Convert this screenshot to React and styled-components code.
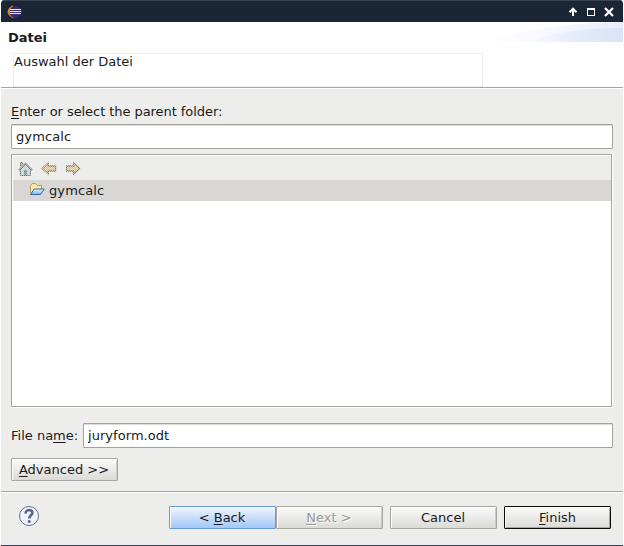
import React from 'react';
import styled, { createGlobalStyle, css } from 'styled-components';

const GlobalStyle = createGlobalStyle`
  * { box-sizing: border-box; }
  body { margin: 0; background: #fff; }
`;

const Window = styled.div`
  width: 622px;
  height: 546px;
  margin-left: 1px;
  display: flex;
  flex-direction: column;
  background: #ededeb;
  border-bottom: 1px solid #36404f;
  border-radius: 4px 4px 0 0;
  overflow: hidden;
  color: #1a1a1a;
  font-family: 'DejaVu Sans', sans-serif;
  font-size: 13px;
  line-height: 16px;
  white-space: nowrap;
`;

const TitleBar = styled.header`
  height: 22px;
  flex: none;
  display: flex;
  align-items: center;
  justify-content: space-between;
  padding: 1px 8px 0 6px;
  background: #1a2636;
  border-top: 1px solid #3b4655;
`;

const WindowControls = styled.div`
  display: flex;
  gap: 6px;
`;

const Banner = styled.section`
  height: 67px;
  flex: none;
  display: flex;
  justify-content: space-between;
  background: #fff;
  border-bottom: 1px solid #fff;
  box-shadow: inset 0 -1px #a6a6a2;
`;

const BannerText = styled.div`
  padding: 8px 0 0 7px;
`;

const Title = styled.h1`
  margin: 0;
  font-size: 13px;
  line-height: 16px;
  font-weight: bold;
`;

const Message = styled.p`
  width: 470px;
  height: 34px;
  margin: 7px 0 0 5px;
  border: 1px solid #ececec;
`;

const Form = styled.main`
  height: 403px;
  flex: none;
  padding: 15px 10px 0;
  border-bottom: 1px solid #a5a59d;
  display: flex;
  flex-direction: column;
  align-items: flex-start;
`;

const Label = styled.label`
  letter-spacing: ${({ $spacing }) => $spacing || '0'};
`;

const Key = styled.span`
  text-decoration: underline;
  text-decoration-thickness: 1px;
  text-underline-offset: 2px;
  text-decoration-skip-ink: none;
`;

const Field = styled.input`
  height: 25px;
  width: ${({ $width }) => $width};
  padding: 0 4px 1px;
  border: 1px solid #a3a39b;
  border-radius: 1px;
  outline: none;
  background: #fff;
  box-shadow: inset 0 1px #dededb;
  color: inherit;
  font: inherit;
  letter-spacing: ${({ $spacing }) => $spacing || '0'};
`;

const FolderField = styled(Field)`
  margin-top: 4px;
`;

const Tree = styled.div`
  width: 601px;
  height: 253px;
  margin-top: 5px;
  flex: none;
  border: 1px solid #a5a5a1;
  box-shadow: 1px 1px #fff;
  background: #fff;
`;

const TreeTools = styled.div`
  height: 25px;
  display: flex;
  gap: 8px;
  padding: 5px 0 0 4px;
  margin-left: 1px;
  background: #ededeb;
  border-top: 1px solid #fff;
`;

const TreeRow = styled.div`
  height: 21px;
  display: flex;
  align-items: center;
  gap: 4px;
  margin-left: 1px;
  padding-left: 16px;
  background: #d8d7d5;
  letter-spacing: 0.1px;
`;

const NameRow = styled.div`
  display: flex;
  align-items: center;
  justify-content: space-between;
  width: 602px;
  margin-top: 16px;
`;

const buttonTones = {
  focus: css`
    border-color: #659bda;
    background: linear-gradient(#f0f6ff, #a3c7f7);
    box-shadow: inset 1px 1px #fff;
  `,
  disabled: css`
    color: #999995;
    text-shadow: 1px 1px #fff;
  `,
  primary: css`
    padding-right: 0;
    border-color: #0b0b0b;
    box-shadow: inset 1px 1px #fff, inset -1px -1px #a7a7a1;
  `,
};

const Button = styled.button`
  width: 107px;
  height: 23px;
  padding: 1px 1px 0 0;
  flex: none;
  border: 1px solid #a7a7a1;
  border-radius: 1px;
  background: linear-gradient(#fbfbfa, #dadad7);
  box-shadow: inset 1px 1px #fff, inset -1px 0 #cbcbc5;
  color: inherit;
  font: inherit;
  ${({ $tone }) => buttonTones[$tone]}
`;

const AdvancedButton = styled(Button)`
  margin-top: 10px;
`;

const Footer = styled.footer`
  flex: 1;
  display: flex;
  align-items: flex-start;
  justify-content: space-between;
  padding: 12px 12px 0 17px;
  border-top: 1px solid #fff;
`;

const Actions = styled.div`
  display: flex;
  gap: 7px;
  margin-top: 1px;
`;

const Pager = styled.div`
  display: flex;
`;

const EclipseIcon = () => (
  <svg width="16" height="16" viewBox="0 0 16 16">
    <path d="M6 1.8C-.8 4.7-.8 10.6 6 13.9C1.8 10.8 1.8 5.3 6 1.8Z" fill="#ef8616" stroke="#ef8616" strokeWidth=".7" />
    <circle cx="8.6" cy="8" r="5.9" fill="#37296b" />
    <path d="M3 5.5H14M2.6 7.5H14.3M3 9.5H14" stroke="#e9e8f7" />
  </svg>
);

const UpIcon = () => (
  <svg width="12" height="12" viewBox="0 0 12 12">
    <path d="M6 10V3M2.5 6.2L6 2.7L9.5 6.2" fill="none" stroke="#fff" strokeWidth="2" />
  </svg>
);

const MaximizeIcon = () => (
  <svg width="12" height="12" viewBox="0 0 12 12" shapeRendering="crispEdges">
    <path d="M2 2H10V10H2ZM3 4V9H9V4Z" fill="#fff" fillRule="evenodd" />
  </svg>
);

const CloseIcon = () => (
  <svg width="12" height="12" viewBox="0 0 12 12">
    <path d="M2 2L10 10M10 2L2 10" stroke="#fff" strokeWidth="2.2" />
  </svg>
);

const BannerSwoosh = () => (
  <svg width="140" height="20" viewBox="0 0 140 20">
    <defs>
      <linearGradient id="swoosh">
        <stop offset="0" stopColor="#fff" />
        <stop offset=".5" stopColor="#f6f8fe" />
        <stop offset="1" stopColor="#e6edfa" />
      </linearGradient>
      <linearGradient id="swooshFront">
        <stop offset="0" stopColor="#dbe4f7" stopOpacity="0" />
        <stop offset="1" stopColor="#dbe4f7" />
      </linearGradient>
    </defs>
    <path d="M0 20C38 8 82 1 140 0V20Z" fill="url(#swoosh)" />
    <path d="M45 20C65 12 95 6 140 6V20Z" fill="url(#swooshFront)" />
  </svg>
);

const Dither = () => (
  <defs>
    <pattern id="dither" width="2" height="2" patternUnits="userSpaceOnUse">
      <path d="M0 0H1V1H0ZM1 1H2V2H1Z" fill="#ededeb" shapeRendering="crispEdges" />
    </pattern>
  </defs>
);

const HomeIcon = () => (
  <svg width="16" height="16" viewBox="0 0 16 16">
    <Dither />
    <path d="M3.5 6V1.5H5.5V4" fill="#a5a398" stroke="#77776f" />
    <path d="M3.5 8V14.5H13.5V8L8.5 3Z" fill="#c3d3de" stroke="#66747a" />
    <path d="M1.8 9.2L8.5 2.5L15.2 9.2" fill="none" stroke="#626c70" strokeWidth="1.5" />
    <path d="M7 14V9H10V14Z" fill="#5e9080" />
    <path d="M0 0H16V16H0Z" fill="url(#dither)" opacity=".55" />
  </svg>
);

const ArrowIcon = ({ forward }) => (
  <svg width="16" height="16" viewBox="0 0 16 16">
    <g transform={forward ? 'translate(16 0) scale(-1 1)' : undefined}>
      <path d="M1.2 7.5L7.3 2V5H14.5V10H7.3V13Z" fill="#efc25a" stroke="#a16d18" strokeWidth="1.3" />
    </g>
    <path d="M0 0H16V16H0Z" fill="url(#dither)" opacity=".7" />
  </svg>
);

const FolderIcon = () => (
  <svg width="16" height="16" viewBox="0 0 16 16">
    <defs>
      <linearGradient id="folderFront" x2="0" y2="1">
        <stop stopColor="#e2f3fc" />
        <stop offset="1" stopColor="#79b3e8" />
      </linearGradient>
    </defs>
    <path d="M1.5 10.5V2.5L3 .5H6.5L8 2.5H12.5V6" fill="#fce9a6" stroke="#c6a052" />
    <path d="M1.5 11.5L5.2 6H15.3L11.5 11.5H2Z" fill="url(#folderFront)" stroke="#3269ab" />
  </svg>
);

const HelpIcon = () => (
  <svg width="22" height="22" viewBox="0 0 22 22">
    <circle cx="11" cy="11" r="9.5" fill="#f1f3f6" stroke="#63718f" />
    <path d="M7.7 8.6C7.3 3.8 14.6 3.9 14.4 7.8C14.2 10.3 11.3 10.2 11.3 13.4" fill="none" stroke="#53658d" strokeWidth="2.6" />
    <circle cx="11.2" cy="16.4" r="1.5" fill="#53658d" />
  </svg>
);

export default function App() {
  return (
    <>
      <GlobalStyle />
      <Window>
        <TitleBar>
          <EclipseIcon />
          <WindowControls>
            <UpIcon />
            <MaximizeIcon />
            <CloseIcon />
          </WindowControls>
        </TitleBar>
        <Banner>
          <BannerText>
            <Title>Datei</Title>
            <Message>Auswahl der Datei</Message>
          </BannerText>
          <BannerSwoosh />
        </Banner>
        <Form>
          <Label $spacing="-0.06px"><Key>E</Key>nter or select the parent folder:</Label>
          <FolderField $width="602px" $spacing="0.1px" defaultValue="gymcalc" />
          <Tree>
            <TreeTools>
              <HomeIcon />
              <ArrowIcon />
              <ArrowIcon forward />
            </TreeTools>
            <TreeRow>
              <FolderIcon />
              gymcalc
            </TreeRow>
          </Tree>
          <NameRow>
            <Label>File na<Key>m</Key>e:</Label>
            <Field $width="530px" $spacing="0.05px" defaultValue="juryform.odt" />
          </NameRow>
          <AdvancedButton><Key>A</Key>dvanced &gt;&gt;</AdvancedButton>
        </Form>
        <Footer>
          <HelpIcon />
          <Actions>
            <Pager>
              <Button $tone="focus">&lt; <Key>B</Key>ack</Button>
              <Button $tone="disabled" disabled><Key>N</Key>ext &gt;</Button>
            </Pager>
            <Button>Cancel</Button>
            <Button $tone="primary"><Key>F</Key>inish</Button>
          </Actions>
        </Footer>
      </Window>
    </>
  );
}
